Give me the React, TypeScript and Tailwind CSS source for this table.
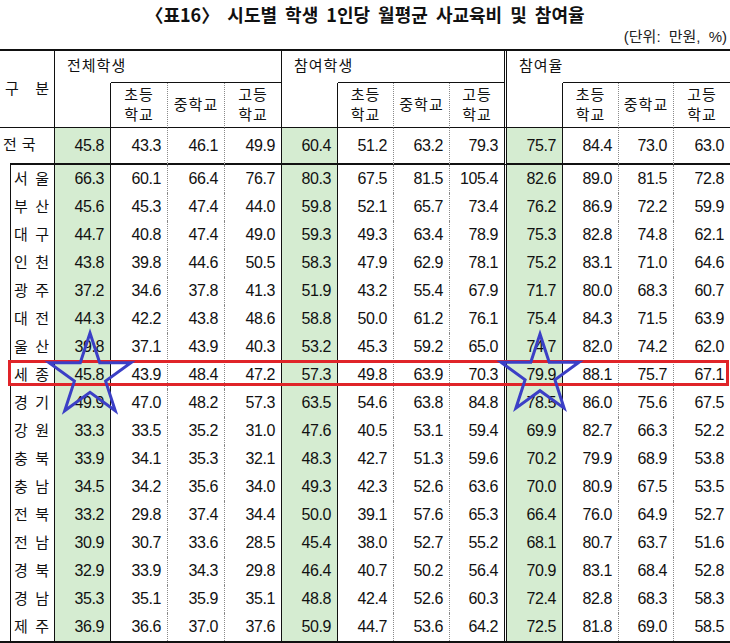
import React from 'react';

// 열 구분선: 0 라벨, 1/5/9 녹색 합계열, 8 은 이중선
const RB = [
  '[border-right:1px_solid_#111]',
  '[border-right:1px_solid_#111]',
  '[border-right:1px_dotted_#8a8a8a]',
  '[border-right:1px_dotted_#8a8a8a]',
  '[border-right:1px_solid_#111]',
  '[border-right:1px_solid_#111]',
  '[border-right:1px_dotted_#8a8a8a]',
  '[border-right:1px_dotted_#8a8a8a]',
  '[border-right:3px_double_#111]',
  '[border-right:1px_solid_#111]',
  '[border-right:1px_dotted_#8a8a8a]',
  '[border-right:1px_dotted_#8a8a8a]',
  '',
];

const GREEN = [1, 5, 9];

const national = ['45.8', '43.3', '46.1', '49.9', '60.4', '51.2', '63.2', '79.3', '75.7', '84.4', '73.0', '63.0'];

const rows: [string, string[]][] = [
  ['서울', ['66.3', '60.1', '66.4', '76.7', '80.3', '67.5', '81.5', '105.4', '82.6', '89.0', '81.5', '72.8']],
  ['부산', ['45.6', '45.3', '47.4', '44.0', '59.8', '52.1', '65.7', '73.4', '76.2', '86.9', '72.2', '59.9']],
  ['대구', ['44.7', '40.8', '47.4', '49.0', '59.3', '49.3', '63.4', '78.9', '75.3', '82.8', '74.8', '62.1']],
  ['인천', ['43.8', '39.8', '44.6', '50.5', '58.3', '47.9', '62.9', '78.1', '75.2', '83.1', '71.0', '64.6']],
  ['광주', ['37.2', '34.6', '37.8', '41.3', '51.9', '43.2', '55.4', '67.9', '71.7', '80.0', '68.3', '60.7']],
  ['대전', ['44.3', '42.2', '43.8', '48.6', '58.8', '50.0', '61.2', '76.1', '75.4', '84.3', '71.5', '63.9']],
  ['울산', ['39.8', '37.1', '43.9', '40.3', '53.2', '45.3', '59.2', '65.0', '74.7', '82.0', '74.2', '62.0']],
  ['세종', ['45.8', '43.9', '48.4', '47.2', '57.3', '49.8', '63.9', '70.3', '79.9', '88.1', '75.7', '67.1']],
  ['경기', ['49.9', '47.0', '48.2', '57.3', '63.5', '54.6', '63.8', '84.8', '78.5', '86.0', '75.6', '67.5']],
  ['강원', ['33.3', '33.5', '35.2', '31.0', '47.6', '40.5', '53.1', '59.4', '69.9', '82.7', '66.3', '52.2']],
  ['충북', ['33.9', '34.1', '35.3', '32.1', '48.3', '42.7', '51.3', '59.6', '70.2', '79.9', '68.9', '53.8']],
  ['충남', ['34.5', '34.2', '35.6', '34.0', '49.3', '42.3', '52.6', '63.6', '70.0', '80.9', '67.5', '53.5']],
  ['전북', ['33.2', '29.8', '37.4', '34.4', '50.0', '39.1', '57.6', '65.3', '66.4', '76.0', '64.9', '52.7']],
  ['전남', ['30.9', '30.7', '33.6', '28.5', '45.4', '38.0', '52.7', '55.2', '68.1', '80.7', '63.7', '51.6']],
  ['경북', ['32.9', '33.9', '34.3', '29.8', '46.4', '40.7', '50.2', '56.4', '70.9', '83.1', '68.4', '52.8']],
  ['경남', ['35.3', '35.1', '35.9', '35.1', '48.8', '42.4', '52.6', '60.3', '72.4', '82.8', '68.3', '58.3']],
  ['제주', ['36.9', '36.6', '37.0', '37.6', '50.9', '44.7', '53.6', '64.2', '72.5', '81.8', '69.0', '58.5']],
];

const starPoints = (cx: number, cy: number, R: number) => {
  const r = R * 0.382;
  const pts: string[] = [];
  for (let i = 0; i < 10; i++) {
    const a = (-90 + i * 36) * (Math.PI / 180);
    const rad = i % 2 === 0 ? R : r;
    pts.push(`${(cx + rad * Math.cos(a)).toFixed(1)},${(cy + rad * Math.sin(a)).toFixed(1)}`);
  }
  return pts.join(' ');
};

const Num = ({ v, col, extra = '' }: { v: string; col: number; extra?: string }) => (
  <div
    className={`flex items-center justify-end pr-[6px] text-[16px] tracking-[-0.4px] ${RB[col + 1]} ${
      GREEN.includes(col + 1) ? 'bg-[#d5ecd1]' : ''
    } ${extra}`}
  >
    {v}
  </div>
);

const GroupHead = ({ label, last }: { label: string; last?: boolean }) => (
  <div className={`col-span-4 flex flex-col ${last ? '' : label === '참여학생' ? RB[8] : RB[4]}`}>
    <div className="flex-1 flex items-center pl-[12px] text-[15px] tracking-[1px]">{label}</div>
    <div className="ml-[56px] h-px bg-[#111]" />
  </div>
);

const SubHead = ({ col }: { col: number }) => {
  const k = col % 4;
  return (
    <div className={`border-b flex items-center justify-center text-center text-[15px] leading-[20px] tracking-[1px] ${RB[col]}`}>
      {k === 1 ? '' : k === 2 ? (
        <span>초등<br />학교</span>
      ) : k === 3 ? (
        <span>중학교</span>
      ) : (
        <span>고등<br />학교</span>
      )}
    </div>
  );
};

export default function App() {
  return (
    <div className="relative w-[730px] h-[643px] overflow-hidden bg-white text-[#111] font-['Liberation_Sans','Noto_Sans_CJK_KR',sans-serif]">
      <div className="h-[28px] flex items-center justify-center text-[18px] font-bold [word-spacing:4px] font-['Noto_Sans_CJK_KR',sans-serif]">
        〈표16〉 시도별 학생 1인당 월평균 사교육비 및 참여율
      </div>
      <div className="h-[18px] flex items-center justify-end pr-[3px] text-[15px] text-[#222] [word-spacing:4px]">(단위: 만원, %)</div>

      <div className="mt-[3px] w-[730px] border-t-2 border-b-2 grid grid-cols-[55px_56px_57px_57px_57px_56px_56px_56px_57px_56px_56px_55px_56px] grid-rows-[32px_45px_37px_repeat(17,28px)]">
        {/* 머리글 */}
        <div className={`row-span-2 border-b flex items-center justify-between px-[5px] text-[15px] ${RB[0]}`}>
          <span>구</span>
          <span>분</span>
        </div>
        <GroupHead label="전체학생" />
        <GroupHead label="참여학생" />
        <GroupHead label="참여율" last />
        {Array.from({ length: 12 }, (_, i) => (
          <SubHead key={i} col={i + 1} />
        ))}

        {/* 전국 */}
        <div className={`flex flex-col ${RB[0]}`}>
          <div className="flex-1 flex items-center gap-[5px] pl-[3px] text-[15px]">
            <span>전</span>
            <span>국</span>
          </div>
          <div className="ml-[10px] h-[2px] bg-[#111]" />
        </div>
        {national.map((v, i) => (
          <Num key={i} v={v} col={i} extra="border-b-2" />
        ))}

        {/* 시도 */}
        {rows.map(([name, vals]) => (
          <React.Fragment key={name}>
            <div className={`ml-[10px] border-l flex items-center justify-between pl-[3px] pr-[5px] text-[15px] ${RB[0]}`}>
              <span>{name[0]}</span>
              <span>{name[1]}</span>
            </div>
            {vals.map((v, i) => (
              <Num key={i} v={v} col={i} />
            ))}
          </React.Fragment>
        ))}
      </div>

      {/* 강조 표시 */}
      <div className="absolute left-[8px] top-[360px] w-[721px] h-[26px] border-[3px] border-[#e02429] pointer-events-none" />
      <svg className="absolute left-0 top-0 pointer-events-none" width="730" height="643" viewBox="0 0 730 643">
        <polygon points={starPoints(90, 376, 43)} fill="none" stroke="#3b3fc6" strokeWidth="3" />
        <polygon points={starPoints(540, 375, 41)} fill="none" stroke="#3b3fc6" strokeWidth="3" />
      </svg>
    </div>
  );
}
